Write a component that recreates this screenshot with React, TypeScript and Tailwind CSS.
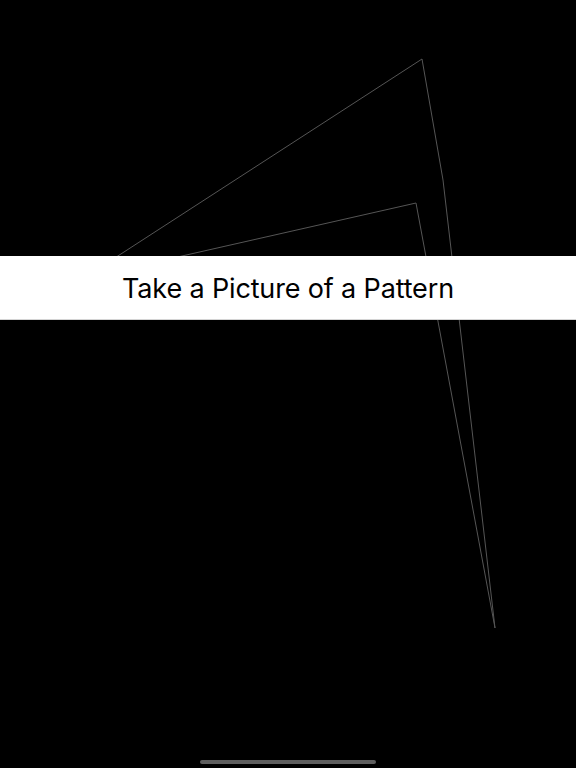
const App = () => {
  return (
    <div className="relative h-[768px] w-[576px] overflow-hidden bg-black" style={{ fontFamily: "Inter, 'Noto Sans', sans-serif" }}>
      {/* pattern outline */}
      <svg className="absolute inset-0" width="576" height="768" viewBox="0 0 576 768">
        <polyline
          points="90,274 422,59 443,180 495,628"
          fill="none"
          stroke="#555555"
          strokeWidth="1"
        />
        <polyline
          points="120,270 416,203 495,628"
          fill="none"
          stroke="#555555"
          strokeWidth="1"
        />
      </svg>

      <div className="relative pt-[256px]">
        <div className="flex h-[64px] items-center justify-center border-b border-[#d4d4d4] bg-white pt-[4px]">
          <span className="text-[27px] tracking-[-0.15px] text-black">Take a Picture of a Pattern</span>
        </div>
      </div>

      <div className="absolute bottom-[4px] left-1/2 h-[4px] w-[176px] -translate-x-1/2 rounded-full bg-[#5e5e5e]" />
    </div>
  );
};

export default App;
